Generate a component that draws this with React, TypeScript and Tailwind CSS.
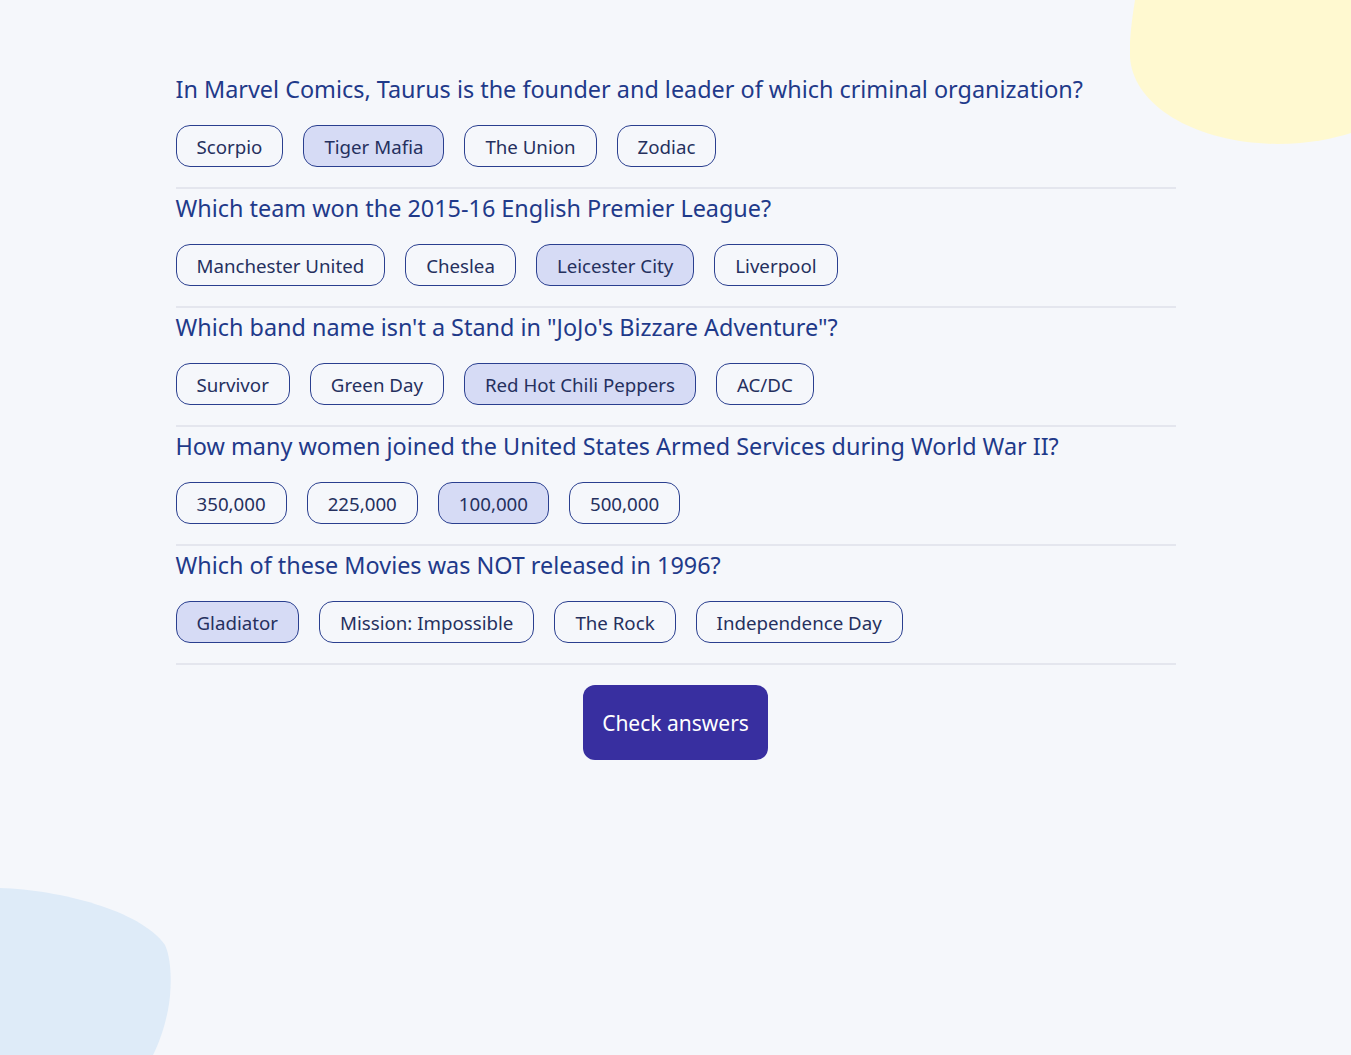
const questions = [
  {
    q: "In Marvel Comics, Taurus is the founder and leader of which criminal organization?",
    answers: ["Scorpio", "Tiger Mafia", "The Union", "Zodiac"],
    picked: 1,
  },
  {
    q: "Which team won the 2015-16 English Premier League?",
    answers: ["Manchester United", "Cheslea", "Leicester City", "Liverpool"],
    picked: 2,
  },
  {
    q: "Which band name isn't a Stand in \"JoJo's Bizzare Adventure\"?",
    answers: ["Survivor", "Green Day", "Red Hot Chili Peppers", "AC/DC"],
    picked: 2,
  },
  {
    q: "How many women joined the United States Armed Services during World War II?",
    answers: ["350,000", "225,000", "100,000", "500,000"],
    picked: 2,
  },
  {
    q: "Which of these Movies was NOT released in 1996?",
    answers: ["Gladiator", "Mission: Impossible", "The Rock", "Independence Day"],
    picked: 0,
  },
];

export default function App() {
  return (
    <div className="relative min-h-screen overflow-hidden bg-[#f5f7fb] font-['Noto_Sans',sans-serif]">
      {/* blobs */}
      <svg className="absolute right-0 top-0" width="221" height="146" viewBox="1130 0 221 146">
        <path
          d="M1135,0 C1131,25 1128,50 1131,65 C1140,110 1200,143 1277,144 C1310,144 1335,138 1351,133 L1351,0 Z"
          fill="#fff9d0"
        />
      </svg>
      <svg className="absolute bottom-0 left-0" width="175" height="168" viewBox="0 887 175 168">
        <path
          d="M0,888 C60,890 140,910 165,945 C172,960 172,990 168,1010 C164,1030 158,1045 153,1055 L0,1055 Z"
          fill="#deebf8"
        />
      </svg>

      <div className="relative mx-auto w-[1000px] pt-[73px]">
        {questions.map((item, i) => (
          <div key={i} className={i > 0 ? "pt-[3px]" : ""}>
            <h2 className="text-[23.4px] leading-[32px] text-[#1f3a8a]">{item.q}</h2>
            <div className="mt-5 flex gap-5">
              {item.answers.map((a, j) => (
                <button
                  key={j}
                  className={`h-[42px] rounded-[14px] border border-[#2a3f8f] px-5 pt-[3px] text-[18.7px] text-[#25305e] ${
                    j === item.picked ? "bg-[#d6dbf5]" : "bg-transparent"
                  }`}
                >
                  {a}
                </button>
              ))}
            </div>
            <div className="mt-5 h-[2px] bg-[#e4e6ee]" />
          </div>
        ))}
        <div className="mt-5 flex justify-center">
          <button className="h-[75px] w-[185px] rounded-[12px] bg-[#382fa0] pt-[3px] text-[21px] text-white">
            Check answers
          </button>
        </div>
      </div>
    </div>
  );
}
